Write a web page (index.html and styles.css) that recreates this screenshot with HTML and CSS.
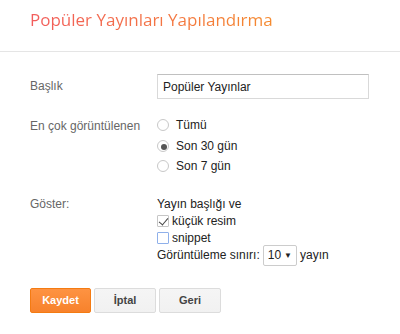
FILE: index.html
```html
<!DOCTYPE html>
<html lang="tr">
<head>
    <meta charset="UTF-8">
    <meta name="viewport" content="width=device-width, initial-scale=1.0">
    <title>Popüler Yayınları Yapılandırma</title>
    <link rel="stylesheet" href="styles.css">
</head>
<body>
    <div class="cabecera">
        <h1>Popüler Yayınları Yapılandırma</h1>
    </div>
    <div class="formulario">
        <label class="etiqueta" for="baslik">Başlık</label>
        <div class="control">
            <input type="text" id="baslik" class="texto" value="Popüler Yayınlar">
        </div>

        <div class="etiqueta etiqueta-radio">En çok görüntülenen</div>
        <div class="control lista-radio">
            <label class="opcion"><input type="radio" name="periodo"> Tümü</label>
            <label class="opcion"><input type="radio" name="periodo" checked> Son 30 gün</label>
            <label class="opcion"><input type="radio" name="periodo"> Son 7 gün</label>
        </div>

        <div class="etiqueta etiqueta-goster">Göster:</div>
        <div class="control lista-goster">
            <div class="linea">Yayın başlığı ve</div>
            <label class="linea"><input type="checkbox" checked>küçük resim</label>
            <label class="linea"><input type="checkbox">snippet</label>
            <div class="linea">Görüntüleme sınırı:
                <span class="selector">10 <span class="flecha">▼</span></span>
                yayın
            </div>
        </div>
    </div>
    <div class="botones">
        <button class="boton boton-principal">Kaydet</button>
        <button class="boton">İptal</button>
        <button class="boton">Geri</button>
    </div>
</body>
</html>
```

FILE: styles.css
```css
body {
    font-family: 'Liberation Sans', Arial, sans-serif;
    font-size: 12px;
    color: #222;
    background: #fff;
    margin: 0;
}
.cabecera {
    padding: 7px 30px 0;
    height: 44px;
    border-bottom: 1px solid #e5e5e5;
}
h1 {
    margin: 0;
    font-family: 'Open Sans', sans-serif;
    font-weight: normal;
    font-size: 17px;
    line-height: 26px;
    display: inline-block;
    background: linear-gradient(90deg, #f25c5c, #f58a2e);
    -webkit-background-clip: text;
    background-clip: text;
    color: transparent;
}
.formulario {
    display: grid;
    grid-template-columns: 127px 1fr;
    padding: 22px 30px 0;
    row-gap: 17px;
}
.etiqueta {
    color: #666;
    padding-top: 4px;
    line-height: 16px;
}
.control {
    min-width: 0;
}
.texto {
    width: 212px;
    height: 25px;
    box-sizing: border-box;
    border: 1px solid #d9d9d9;
    border-top-color: #c0c0c0;
    padding: 0 5px;
    font-family: inherit;
    font-size: 12px;
    color: #222;
    margin: 0;
}
.etiqueta-radio {
    padding-top: 0;
    margin-top: 2px;
}
.lista-radio {
    display: flex;
    flex-direction: column;
    margin-top: -1px;
}
.opcion {
    display: flex;
    align-items: center;
    height: 20.5px;
}
input[type="radio"] {
    appearance: none;
    -webkit-appearance: none;
    width: 12px;
    height: 12px;
    margin: 0 7px 0 0;
    border: 1px solid #c8c8c8;
    border-radius: 50%;
    background: #fff;
    position: relative;
}
input[type="radio"]:checked::after {
    content: "";
    position: absolute;
    left: 3px;
    top: 3px;
    width: 6px;
    height: 6px;
    border-radius: 50%;
    background: #555;
}
.etiqueta-goster {
    padding-top: 0;
    margin-top: 2px;
}
.lista-goster {
    margin-top: 2px;
}
.linea {
    display: flex;
    align-items: center;
    height: 17px;
}
input[type="checkbox"] {
    appearance: none;
    -webkit-appearance: none;
    width: 12px;
    height: 12px;
    margin: 0 3px 0 0;
    border: 1px solid #c6c6c6;
    border-radius: 1px;
    background: #fff;
    position: relative;
}
input[type="checkbox"]:not(:checked) {
    border-color: #8fb0ea;
}
input[type="checkbox"]:checked::after {
    content: "";
    position: absolute;
    left: 3px;
    top: 0;
    width: 4px;
    height: 8px;
    border: solid #444;
    border-width: 0 1.5px 1.5px 0;
    transform: rotate(40deg);
}
.selector {
    display: inline-flex;
    align-items: center;
    height: 19px;
    margin: 0 3px;
    padding: 0 4px;
    border: 1px solid #ccc;
    border-radius: 2px;
    gap: 3px;
}
.flecha {
    font-size: 8px;
}
.botones {
    display: flex;
    gap: 3px;
    padding: 24px 30px 0;
}
.boton {
    width: 62px;
    height: 25px;
    font-family: inherit;
    font-size: 11px;
    font-weight: bold;
    color: #444;
    background: linear-gradient(#f5f5f5, #f1f1f1);
    border: 1px solid #dcdcdc;
    border-radius: 2px;
    padding: 0;
    cursor: pointer;
}
.boton-principal {
    width: 61px;
    color: #fff;
    background: linear-gradient(#fe9342, #f7822c);
    border-color: #f47b12;
}
```
